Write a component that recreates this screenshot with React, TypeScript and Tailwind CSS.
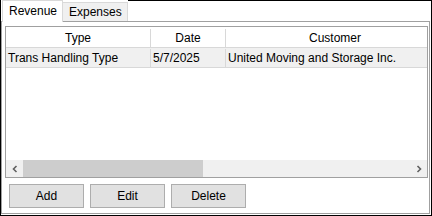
import React from 'react';

const cols = [
  { title: 'Type', w: 'w-[145px]' },
  { title: 'Date', w: 'w-[75px]' },
  { title: 'Customer', w: 'w-[219px]' },
  { title: '', w: 'w-[120px]' },
];

const row = ['Trans Handling Type', '5/7/2025', 'United Moving and Storage Inc.', ''];

const WinButton: React.FC<{ label: string }> = ({ label }) => (
  <button className="w-[75px] h-[24px] bg-[#e1e1e1] border border-[#adadad] text-[12px] text-black flex items-center justify-center">
    {label}
  </button>
);

export default function App() {
  return (
    <div
      className="w-[432px] h-[216px] bg-white border-l border-r border-b border-black flex flex-col text-[12px] text-black"
      style={{ fontFamily: '"Liberation Sans", Arial, sans-serif' }}
    >
      {/* tab strip */}
      <div className="h-[22px] flex shrink-0">
        <div className="ml-px w-[61px] h-[22px] bg-white border-l border-t border-r border-[#d9d9d9] flex items-center pl-[6px] pb-[1px] z-10">
          Revenue
        </div>
        <div className="mt-[2px] w-[65px] h-[20px] bg-[#f0f0f0] border border-[#d9d9d9] border-l-0 flex items-center pl-[6px]">
          Expenses
        </div>
        <div className="flex-1 border-t border-black" />
      </div>

      {/* tab page */}
      <div className="mr-px mb-px -mt-px flex-1 border border-[#a0a0a0] pt-[4px] pl-[3px] flex flex-col">
        <div className="w-[423px] h-[152px] border border-[#a0a0a0] flex flex-col overflow-hidden">
          <div className="flex-1 overflow-hidden">
            <div className="flex h-[21px] bg-white border-b border-[#d8d8d8] pt-[2px]">
              {cols.map((c, i) => (
                <div key={i} className={`${c.w} shrink-0 border-r border-[#d8d8d8] flex items-center justify-center`}>
                  {c.title}
                </div>
              ))}
            </div>
            <div className="flex h-[20px] bg-[#f0f0f0] border-b border-[#d8d8d8] pt-px">
              {cols.map((c, i) => (
                <div key={i} className={`${c.w} shrink-0 border-r border-[#d8d8d8] flex items-center pl-[2px] whitespace-nowrap`}>
                  {row[i]}
                </div>
              ))}
            </div>
          </div>
          {/* horizontal scrollbar */}
          <div className="h-[17px] bg-[#f0f0f0] flex shrink-0">
            <div className="w-[17px] flex items-center justify-center">
              <svg width="8" height="8" viewBox="0 0 8 8">
                <path d="M5.5 1 L2.5 4 L5.5 7" fill="none" stroke="#606060" strokeWidth="1.6" />
              </svg>
            </div>
            <div className="w-[180px] bg-[#cdcdcd]" />
            <div className="flex-1" />
            <div className="w-[17px] flex items-center justify-center">
              <svg width="8" height="8" viewBox="0 0 8 8">
                <path d="M2.5 1 L5.5 4 L2.5 7" fill="none" stroke="#606060" strokeWidth="1.6" />
              </svg>
            </div>
          </div>
        </div>

        <div className="mt-[6px] ml-[4px] flex gap-[6px]">
          <WinButton label="Add" />
          <WinButton label="Edit" />
          <WinButton label="Delete" />
        </div>
      </div>
    </div>
  );
}
